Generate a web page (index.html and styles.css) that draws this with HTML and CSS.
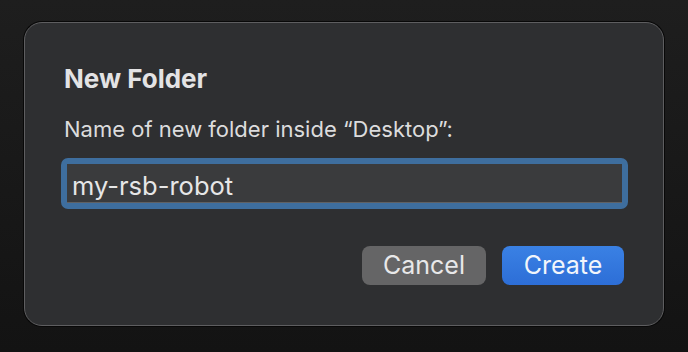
FILE: index.html
```html
<!DOCTYPE html>
<html lang="en">
  <head>
    <meta charset="UTF-8" />
    <title>New Folder</title>
    <link rel="stylesheet" href="styles.css">
  </head>
  <body>
    <div class="dialog">
      <h1 class="dialog-title">New Folder</h1>
      <p class="dialog-label">Name of new folder inside “Desktop”:</p>
      <div class="field-ring">
        <div class="field">my-rsb-robot</div>
      </div>
      <div class="actions">
        <button class="btn btn-cancel">Cancel</button>
        <button class="btn btn-create">Create</button>
      </div>
    </div>
  </body>
</html>
```

FILE: styles.css
```css
html,
body {
  height: 100%;
}

body {
  margin: 0;
  box-sizing: border-box;
  padding: 22px 24px;
  background: linear-gradient(#1e1e1e, #131313);
  font-family: Inter, "Liberation Sans", sans-serif;
}

.dialog {
  box-sizing: border-box;
  width: 640px;
  height: 304px;
  border: 1px solid #5e5e60;
  box-shadow: 0 0 0 1px #080808;
  border-radius: 18px;
  background-color: #2e2f31;
  padding: 0 35px 0 36px;
  display: flex;
  flex-direction: column;
}

.dialog-title {
  margin: 41px 0 0 3px;
  font-size: 26px;
  line-height: 30px;
  font-weight: 700;
  color: #e3e3e4;
}

.dialog-label {
  margin: 22px 0 0 3px;
  font-size: 22px;
  line-height: 26px;
  color: #dcdcdd;
}

.field-ring {
  margin-top: 16px;
  border: 6px solid #3e6e9e;
  border-radius: 7px;
  background-color: #3e6e9e;
}

.field {
  height: 39px;
  box-sizing: border-box;
  background-color: #3a3b3d;
  border-bottom: 1px solid #606163;
  padding-left: 5px;
  font-size: 25.5px;
  line-height: 43px;
  overflow: hidden;
  color: #e6e6e7;
}

.actions {
  display: flex;
  justify-content: flex-end;
  gap: 16px;
  margin: 37px 4px 0 0;
}

.btn {
  height: 39px;
  border: none;
  border-radius: 8px;
  font-family: Inter, "Liberation Sans", sans-serif;
  font-size: 25px;
  color: #e8e8e9;
  padding: 0 0 2px;
}

.btn-cancel {
  width: 124px;
  background-color: #656566;
}

.btn-create {
  width: 122px;
  background: linear-gradient(#3a81e4, #2d6ed7);
  color: #f2f5fb;
}
```
